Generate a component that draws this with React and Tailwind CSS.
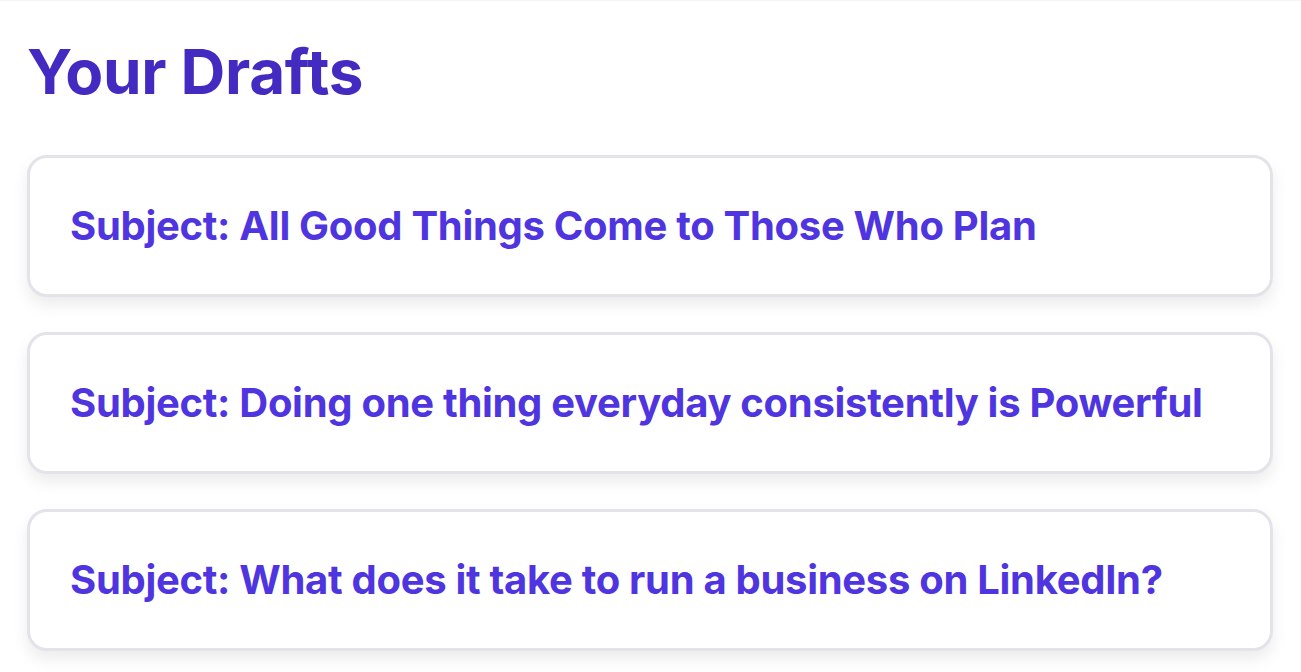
const drafts = [
  "Subject: All Good Things Come to Those Who Plan",
  "Subject: Doing one thing everyday consistently is Powerful",
  "Subject: What does it take to run a business on LinkedIn?",
];

export default function App() {
  return (
    <div
      className="min-h-screen bg-white pl-[27px] pr-[28px] pt-[33px] border-t border-gray-100"
      style={{ fontFamily: "Inter, 'Liberation Sans', sans-serif" }}
    >
      <h1 className="text-[62px] leading-[76px] font-bold tracking-[-0.3px] text-[#432bc2]">
        Your Drafts
      </h1>
      <div className="mt-[45px] flex flex-col gap-[35px]">
        {drafts.map((d) => (
          <div
            key={d}
            className="h-[142px] flex items-center px-[40px] rounded-[20px] border-[3px] border-[#e3e3ea] bg-white shadow-[0_8px_16px_rgba(0,0,0,0.08)]"
          >
            <p className="text-[40px] font-bold text-[#4f35e0] tracking-[-0.3px]">
              {d}
            </p>
          </div>
        ))}
      </div>
    </div>
  );
}
